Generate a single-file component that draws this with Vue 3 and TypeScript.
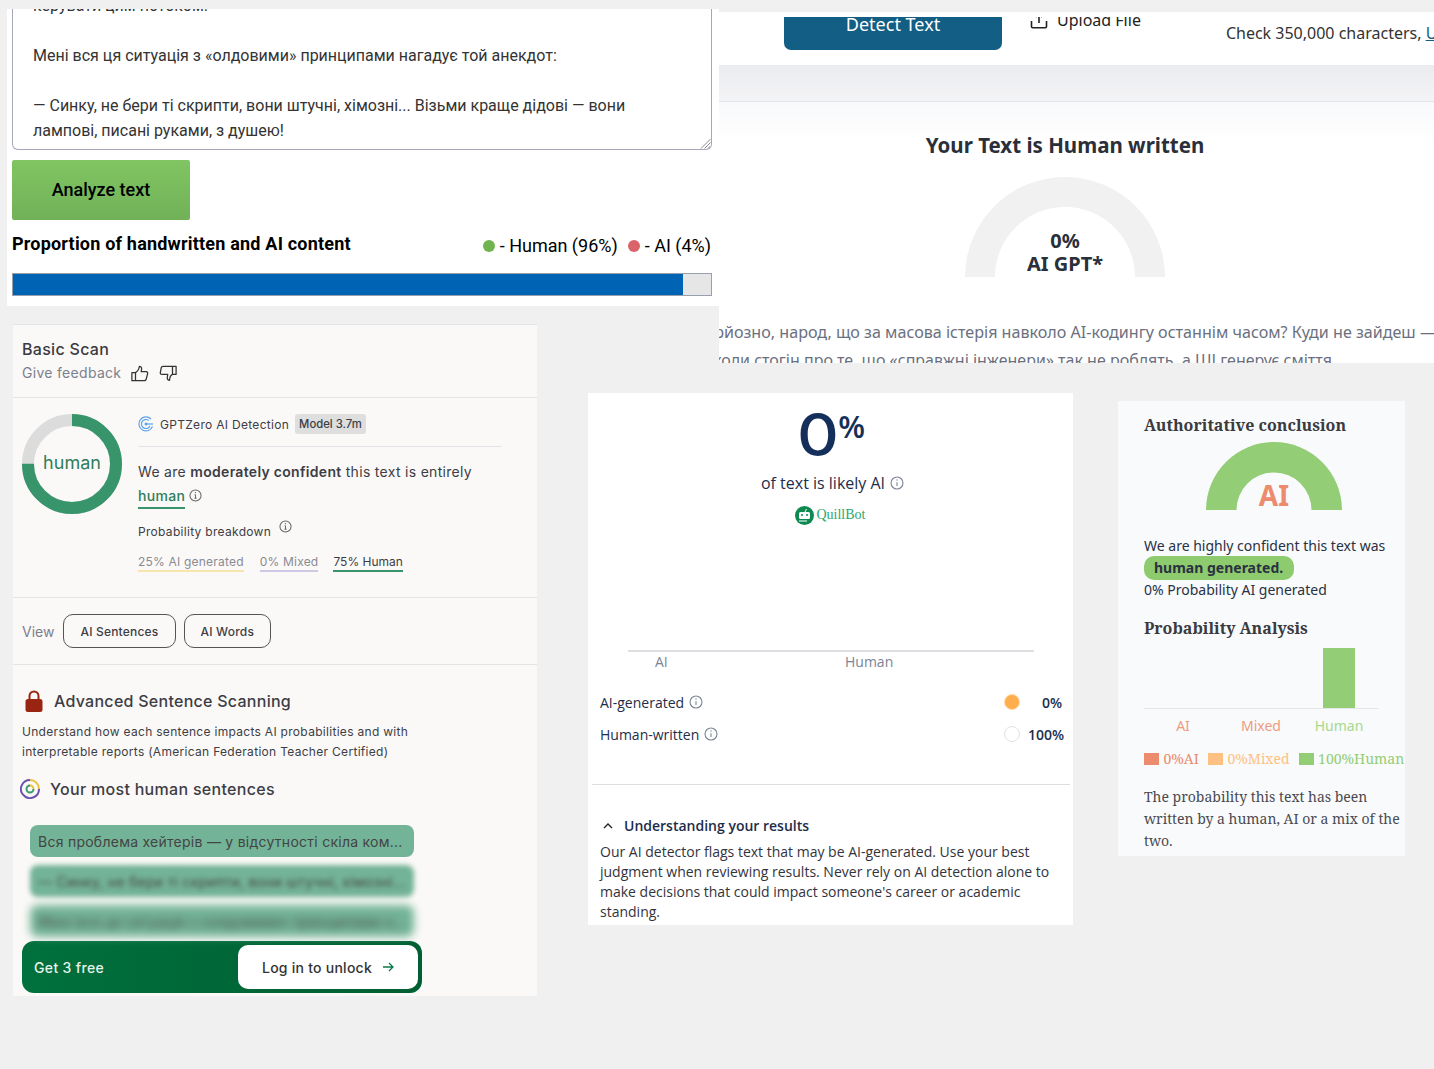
<script setup lang="ts">
interface Stat {
  label: string;
  color: string;
  strong?: boolean;
}

const stats: Stat[] = [
  { label: "25% AI generated", color: "#f8e5ad" },
  { label: "0% Mixed", color: "#cfc9e6" },
  { label: "75% Human", color: "#38956b", strong: true },
];

const sentences = [
  { text: "Вся проблема хейтерів — у відсутності скіла ком...", blur: 0 },
  { text: "— Синку, не бери ті скрипти, вони штучні, хімозні...", blur: 2.5 },
  { text: "Мені вся ця ситуація з «олдовими» принципами н...", blur: 4 },
];

const legend = [
  { label: "0%AI", box: "#ec8b6d", text: "#ec8b6d" },
  { label: "0%Mixed", box: "#fec181", text: "#fec181" },
  { label: "100%Human", box: "#93cd76", text: "#93cd76" },
];

const donutR = 44;
const donutLen = 2 * Math.PI * donutR;
</script>

<template>
  <div class="canvas">
    <!-- textarea checker -->
    <section class="win win-area">
      <div class="area">
        <p class="area-clip">керувати цим потоком.</p>
        <p class="blank">&nbsp;</p>
        <p>Мені вся ця ситуація з «олдовими» принципами нагадує той анекдот:</p>
        <p class="blank">&nbsp;</p>
        <p>— Синку, не бери ті скрипти, вони штучні, хімозні... Візьми краще дідові — вони лампові, писані руками, з душею!</p>
        <svg class="grip" width="11" height="11" viewBox="0 0 11 11">
          <path d="M10.5 1 1 10.5M10.5 4.5 4.5 10.5M10.5 8 8 10.5" stroke="#8a8a8a" stroke-width="1" fill="none" />
        </svg>
      </div>
      <button class="analyze">Analyze text</button>
      <div class="prop-row">
        <h3>Proportion of handwritten and AI content</h3>
        <div class="prop-legend">
          <i class="dot dot-green"></i><span>- Human (96%)</span>
          <i class="dot dot-red"></i><span>- AI (4%)</span>
        </div>
      </div>
      <div class="bar"><div class="bar-fill" :style="{ width: '96%' }"></div></div>
    </section>

    <!-- detect text result -->
    <section class="win win-detect">
      <div class="detect-top">
        <div class="detect-clip">
          <button class="detect-btn">Detect Text</button>
          <div class="upload">
            <svg width="18" height="18" viewBox="0 0 18 18" fill="none" stroke="#222" stroke-width="1.6">
              <path d="M1.5 10v5.500q0 1.200 1.200 1.200h12.600q1.200 0 1.200-1.200V10M9 12V3M5.800 6 9 2.800 12.200 6" />
            </svg>
            <span>Upload File</span>
          </div>
          <div class="check">Check 350,000 characters, <a>Upgrade</a></div>
        </div>
      </div>
      <div class="band"></div>
      <div class="detect-body">
        <h2>Your Text is Human written</h2>
        <div class="gauge-a">
          <svg width="200" height="100" viewBox="0 0 200 100">
            <path d="M0 100A100 100 0 0 1 200 100H170A70 70 0 0 0 30 100Z" fill="#f1f1f1" />
          </svg>
          <div class="gauge-a-text"><div>0%</div><div>AI GPT*</div></div>
        </div>
        <p class="detect-line first">Серйозно, народ, що за масова істерія навколо AI-кодингу останнім часом? Куди не зайдеш — всюди</p>
        <p class="detect-line second">коли стогін про те, що «справжні інженери» так не роблять, а ШІ генерує сміття</p>
      </div>
    </section>

    <!-- gptzero -->
    <section class="win win-zero">
      <header class="zero-head">
        <div class="zero-title">Basic Scan</div>
        <div class="feedback">
          <span>Give feedback</span>
          <svg width="18" height="17" viewBox="0 0 20 18" fill="none" stroke="#333" stroke-width="1.4" stroke-linejoin="round">
            <path d="M1 8h4v9H1zM5 8c2.500-1.500 4-4 4.300-7 1.700 0 2.700 1.200 2.500 3l-.5 3h5.600c1.200 0 1.900 1 1.600 2.100l-1.700 6.300c-.2.900-.9 1.600-1.900 1.600H5" />
          </svg>
          <svg width="18" height="17" viewBox="0 0 20 18" fill="none" stroke="#333" stroke-width="1.4" stroke-linejoin="round">
            <path d="M19 10h-4V1h4zM15 10c-1.500.6-3 2.500-3.300 6.500-1.700 0-2.700-1.200-2.500-3l.5-3.500H3.100C1.900 10 1.200 9 1.500 7.900l1-5.300C2.700 1.700 3.400 1 4.400 1H15" />
          </svg>
        </div>
      </header>
      <div class="zero-main">
        <div class="donut">
          <svg width="100" height="100" viewBox="0 0 100 100">
            <circle cx="50" cy="50" :r="donutR" fill="none" stroke="#dcdcdc" stroke-width="12" />
            <circle cx="50" cy="50" :r="donutR" fill="none" stroke="#38956b" stroke-width="12"
              :stroke-dasharray="`${donutLen * 0.75} ${donutLen}`" transform="rotate(-90 50 50)" />
          </svg>
          <span>human</span>
        </div>
        <div class="zero-info">
          <div class="brand">
            <svg width="16" height="16" viewBox="0 0 16 16" fill="none" stroke="#5aa2ee" stroke-width="1.200">
              <path d="M14.500 10.500A7 7 0 1 1 13 3" />
              <path d="M12 10A4.500 4.500 0 1 1 10.800 4.500" />
              <circle cx="8" cy="8" r="1.500" fill="#5aa2ee" stroke="none" />
              <path d="M8 8h7" />
            </svg>
            <span>GPTZero AI Detection</span>
            <b class="badge">Model 3.7m</b>
          </div>
          <p class="verdict">We are <b>moderately confident</b> this text is entirely</p>
          <p class="verdict v2">
            <b class="human">human</b>
            <svg class="info" width="13" height="13" viewBox="0 0 14 14" fill="none" stroke="#666" stroke-width="1.100">
              <circle cx="7" cy="7" r="6" /><path d="M7 6.300v3.700M5.800 10h2.400M6 6.300h1" /><circle cx="7" cy="4" r=".7" fill="#666" stroke="none" />
            </svg>
          </p>
          <div class="breakdown">
            <span>Probability breakdown</span>
            <svg width="13" height="13" viewBox="0 0 14 14" fill="none" stroke="#666" stroke-width="1.100">
              <circle cx="7" cy="7" r="6" /><path d="M7 6.300v3.700M5.800 10h2.400M6 6.300h1" /><circle cx="7" cy="4" r=".7" fill="#666" stroke="none" />
            </svg>
          </div>
          <div class="stats">
            <span v-for="s in stats" :key="s.label" class="stat" :class="{ strong: s.strong }"
              :style="{ borderBottomColor: s.color }">{{ s.label }}</span>
          </div>
        </div>
      </div>
      <div class="zero-view">
        <span>View</span>
        <button>AI Sentences</button>
        <button>AI Words</button>
      </div>
      <div class="zero-adv">
        <div class="adv-title">
          <svg width="18" height="22" viewBox="0 0 18 22">
            <path d="M4.500 10V6a4.500 4.500 0 0 1 9 0v4" fill="none" stroke="#9a2412" stroke-width="2" />
            <rect x="0.500" y="9" width="17" height="13" rx="2.500" fill="#9a2412" />
          </svg>
          <span>Advanced Sentence Scanning</span>
        </div>
        <p class="adv-desc">Understand how each sentence impacts AI probabilities and with interpretable reports (American Federation Teacher Certified)</p>
        <div class="most">
          <svg width="20" height="20" viewBox="0 0 20 20" fill="none" stroke-width="2">
            <path d="M10 1a9 9 0 0 1 9 9" stroke="#e8c23a" />
            <path d="M19 10a9 9 0 0 1-16 5.700A9 9 0 0 1 10 1" stroke="#6a54b0" />
            <path d="M13.500 10A3.500 3.500 0 1 1 10 6.500" stroke="#3d9a6c" />
            <path d="M10 6.500A3.500 3.500 0 0 1 13.500 10" stroke="#e8c23a" />
          </svg>
          <span>Your most human sentences</span>
        </div>
        <div class="pills">
          <div v-for="s in sentences" :key="s.text" class="pill" :style="{ filter: s.blur ? `blur(${s.blur}px)` : 'none' }">{{ s.text }}</div>
        </div>
        <div class="cta">
          <span>Get 3 free</span>
          <button>
            Log in to unlock
            <svg width="12" height="12" viewBox="0 0 12 12" fill="none" stroke="#0c7a48" stroke-width="1.300">
              <path d="M1 6h10M7 2l4 4-4 4" />
            </svg>
          </button>
        </div>
      </div>
    </section>

    <!-- quillbot -->
    <section class="win win-quill">
      <div class="score"><span class="zero">0</span><span class="pct">%</span></div>
      <div class="likely">
        of text is likely AI
        <svg width="14" height="14" viewBox="0 0 14 14" fill="none" stroke="#7b8494" stroke-width="1.100">
          <circle cx="7" cy="7" r="6" /><path d="M7 6.300v3.700" /><circle cx="7" cy="4" r=".7" fill="#7b8494" stroke="none" />
        </svg>
      </div>
      <div class="q-logo">
        <svg width="19" height="19" viewBox="0 0 19 19">
          <circle cx="9.500" cy="9.500" r="9.500" fill="#0d8a4f" />
          <rect x="4" y="6" width="11" height="7" rx="1.500" fill="#fff" />
          <circle cx="7" cy="9" r="1" fill="#0d8a4f" /><circle cx="12" cy="9" r="1" fill="#0d8a4f" />
          <path d="M10 6l1.500-3" stroke="#fff" stroke-width="1" />
          <path d="M4 15h8" stroke="#fff" stroke-width="1" />
        </svg>
        <span>QuillBot</span>
      </div>
      <div class="q-chart">
        <div class="q-axis"></div>
        <div class="q-labels"><span>AI</span><span>Human</span></div>
      </div>
      <div class="q-row">
        <span>AI-generated</span>
        <svg width="14" height="14" viewBox="0 0 14 14" fill="none" stroke="#7b8494" stroke-width="1.100">
          <circle cx="7" cy="7" r="6" /><path d="M7 6.300v3.700" /><circle cx="7" cy="4" r=".7" fill="#7b8494" stroke="none" />
        </svg>
        <i class="q-dot orange"></i>
        <b class="shift">0%</b>
      </div>
      <div class="q-row">
        <span>Human-written</span>
        <svg width="14" height="14" viewBox="0 0 14 14" fill="none" stroke="#7b8494" stroke-width="1.100">
          <circle cx="7" cy="7" r="6" /><path d="M7 6.300v3.700" /><circle cx="7" cy="4" r=".7" fill="#7b8494" stroke="none" />
        </svg>
        <i class="q-dot"></i>
        <b>100%</b>
      </div>
      <div class="q-rule"></div>
      <div class="q-under">
        <svg width="10" height="6" viewBox="0 0 10 6" fill="none" stroke="#222" stroke-width="1.400"><path d="M1 5l4-4 4 4" /></svg>
        <b>Understanding your results</b>
      </div>
      <p class="q-para">Our AI detector flags text that may be AI-generated. Use your best judgment when reviewing results. Never rely on AI detection alone to make decisions that could impact someone's career or academic standing.</p>
    </section>

    <!-- authoritative -->
    <section class="win win-auth">
      <h4>Authoritative conclusion</h4>
      <div class="gauge-b">
        <svg width="136" height="68" viewBox="0 0 136 68">
          <path d="M0 68A68 68 0 0 1 136 68H105.500A37.500 37.500 0 0 0 30.500 68Z" fill="#93cd76" />
        </svg>
        <span>AI</span>
      </div>
      <div class="auth-text">
        We are highly confident this text was<br />
        <b class="auth-pill">human generated.</b><br />
        0% Probability AI generated
      </div>
      <h4 class="h-prob">Probability Analysis</h4>
      <div class="auth-chart"><div class="auth-bar"></div></div>
      <div class="auth-labels"><span>AI</span><span>Mixed</span><span class="g">Human</span></div>
      <div class="auth-legend">
        <span v-for="l in legend" :key="l.label" :style="{ color: l.text }">
          <i :style="{ background: l.box }"></i>{{ l.label }}
        </span>
      </div>
      <p class="auth-para">The probability this text has been written by a human, AI or a mix of the two.</p>
    </section>
  </div>
</template>

<style>
html,
body {
  margin: 0;
  background: #f0f0f0;
}
</style>

<style scoped>
.canvas {
  position: relative;
  width: 1434px;
  height: 1069px;
  background: #f0f0f0;
  overflow: hidden;
}
.win {
  position: absolute;
  overflow: hidden;
  box-sizing: border-box;
}
p,
h2,
h3,
h4 {
  margin: 0;
}

/* textarea checker */
.win-area {
  left: 7px;
  top: 9px;
  width: 712px;
  height: 297px;
  background: #fff;
  padding: 0 7px 0 5px;
  font-family: Roboto, sans-serif;
  color: #000;
}
.area {
  position: relative;
  height: 141px;
  box-sizing: border-box;
  border: 1px solid #a3a7b8;
  border-top: 0;
  border-radius: 0 0 6px 6px;
  padding: 0 20px;
  font-size: 16px;
  line-height: 25px;
  color: #333;
  overflow: hidden;
}
.area-clip {
  margin-top: -16px;
}
.blank {
  height: 25px;
}
.grip {
  position: absolute;
  right: 0;
  bottom: 0;
}
.analyze {
  display: block;
  width: 178px;
  height: 60px;
  margin-top: 10px;
  padding: 0 0 1px;
  border: 0;
  border-radius: 2px;
  background: linear-gradient(#80c562, #71b158);
  font: 500 18px Roboto, sans-serif;
  color: #000;
}
.prop-row {
  display: flex;
  justify-content: space-between;
  margin-top: 12px;
  height: 29px;
}
.prop-row h3 {
  font-size: 18px;
  font-weight: 700;
  line-height: 24px;
  letter-spacing: 0.2px;
}
.prop-legend {
  display: flex;
  align-items: center;
  margin: -1px 1px 0 0;
  font-size: 18px;
  line-height: 24px;
  height: 29px;
}
.prop-legend span {
  margin-right: 10px;
}
.prop-legend span:last-child {
  margin-right: 0;
}
.dot {
  width: 12px;
  height: 12px;
  border-radius: 50%;
  margin-right: 5px;
}
.dot-green {
  background: #6fb44f;
}
.dot-red {
  background: #d9646a;
}
.bar {
  margin-top: 12px;
  height: 23px;
  width: 700px;
  box-sizing: border-box;
  border: 1px solid #9a9fae;
  background: #e6e6e6;
}
.bar-fill {
  height: 100%;
  background: #0063b4;
}

/* detect */
.win-detect {
  left: 719px;
  top: 12px;
  width: 715px;
  height: 351px;
  background: #fff;
  font-family: "Noto Sans", sans-serif;
}
.detect-top {
  height: 53px;
  padding-top: 5px;
  box-sizing: border-box;
}
.detect-clip {
  display: flex;
  height: 33px;
  overflow: hidden;
  padding-left: 65px;
  white-space: nowrap;
}
.detect-btn {
  flex: none;
  width: 218px;
  height: 33px;
  border: 0;
  border-radius: 0 0 7px 7px;
  background: #125e84;
  color: #fff;
  font: 400 18px "Noto Sans", sans-serif;
  line-height: 14px;
  padding: 0 0 24px;
}
.upload {
  display: flex;
  flex: none;
  gap: 9px;
  margin: -7px 0 0 28px;
  height: 20px;
  align-items: center;
  font-size: 16px;
  color: #222;
}
.check {
  flex: none;
  margin: 5px 0 0 85px;
  font-size: 16px;
  line-height: 22px;
  color: #333;
}
.check a {
  color: #125e84;
  text-decoration: underline;
}
.band {
  height: 37px;
  box-sizing: border-box;
  border-bottom: 1px solid #e3e4ec;
  background: linear-gradient(#ebecf0, #f3f3f5);
}
.detect-body {
  height: 261px;
  overflow: hidden;
  background: linear-gradient(#f8f9fb, #fff 40px);
  text-align: center;
}
.detect-body h2 {
  width: 692px;
  margin-top: 28px;
  font-size: 20.500px;
  font-weight: 700;
  line-height: 30px;
  color: #2a2f3a;
}
.gauge-a {
  position: relative;
  width: 200px;
  height: 100px;
  margin: 17px 0 0 246px;
}
.gauge-a svg {
  display: block;
}
.gauge-a-text {
  position: absolute;
  left: 0;
  right: 0;
  bottom: 2px;
  font-size: 20px;
  font-weight: 700;
  line-height: 23px;
  color: #2a2f3a;
}
.detect-line {
  text-align: left;
  white-space: nowrap;
  font-size: 16px;
  line-height: 28px;
  color: #6b7080;
}
.detect-line.first {
  margin: 41px 0 0 -24px;
  font-size: 16.100px;
}
.detect-line.second {
  margin-left: -6px;
}

/* gptzero */
.win-zero {
  left: 13px;
  top: 324px;
  width: 524px;
  height: 672px;
  background: #faf9f7;
  border-top: 1px solid #e5e5e5;
  font-family: Inter, sans-serif;
  color: #3d3d45;
}
.zero-head {
  height: 73px;
  box-sizing: border-box;
  padding: 14px 9px 0;
  border-bottom: 1px solid #e4e4e4;
}
.zero-title {
  font-size: 16px;
  font-weight: 500;
  line-height: 20px;
  letter-spacing: 0.3px;
  color: #3a3a42;
}
.feedback {
  display: flex;
  align-items: center;
  margin-top: 4px;
  font-size: 14px;
  letter-spacing: 0.3px;
  line-height: 20px;
  color: #7c808c;
}
.feedback svg:first-of-type {
  margin-left: 10px;
}
.feedback svg:last-of-type {
  margin-left: 10px;
}
.zero-main {
  display: flex;
  height: 200px;
  box-sizing: border-box;
  padding: 16px 0 0 9px;
  border-bottom: 1px solid #e4e4e4;
}
.donut {
  position: relative;
  flex: none;
  width: 100px;
  height: 100px;
}
.donut svg {
  display: block;
}
.donut span {
  position: absolute;
  left: 0;
  right: 0;
  top: 38px;
  text-align: center;
  font-size: 18px;
  line-height: 22px;
  color: #2f7d5a;
}
.zero-info {
  width: 364px;
  margin-left: 16px;
}
.brand {
  display: flex;
  align-items: center;
  height: 32px;
  border-bottom: 1px solid #e4e4ea;
  font-size: 12px;
  letter-spacing: 0.3px;
}
.brand svg {
  margin-right: 6px;
  margin-bottom: 12px;
}
.brand span {
  margin-bottom: 12px;
}
.badge {
  margin: 0 0 12px 6px;
  padding: 0 4px;
  height: 20px;
  line-height: 20px;
  border-radius: 3px;
  background: #dedede;
  font-size: 11.300px;
  font-weight: 500;
  letter-spacing: 0;
}
.verdict {
  margin-top: 13px;
  font-size: 14px;
  line-height: 24px;
  letter-spacing: 0.3px;
  white-space: nowrap;
}
.verdict b {
  font-weight: 600;
}
.verdict.v2 {
  margin-top: 1px;
  display: flex;
  align-items: center;
}
.human {
  color: #2f7d5a;
  border-bottom: 2px solid #38956b;
  line-height: 22px;
  font-weight: 500 !important;
}
.info {
  margin: 0 0 4px 4px;
}
.breakdown {
  display: flex;
  align-items: flex-start;
  gap: 8px;
  margin-top: 13px;
  font-size: 12px;
  line-height: 20px;
  letter-spacing: 0.3px;
}
.breakdown svg {
  margin-top: -2px;
}
.stats {
  display: flex;
  gap: 16px;
  margin-top: 11px;
  font-size: 12px;
  letter-spacing: 0.2px;
  color: #8a8a94;
}
.stat {
  line-height: 17px;
  border-bottom: 2px solid;
}
.stat.strong {
  margin-left: -1px;
  color: #3d3d45;
  letter-spacing: 0;
}
.zero-view {
  display: flex;
  align-items: center;
  gap: 8px;
  height: 67px;
  box-sizing: border-box;
  padding-left: 9px;
  border-bottom: 1px solid #e4e4e4;
  font-size: 14px;
  color: #7c808c;
}
.zero-view span {
  margin-right: 1px;
}
.zero-view button {
  height: 34px;
  padding: 0 16px;
  border: 1px solid #555;
  border-radius: 10px;
  background: transparent;
  font: 500 12px Inter, sans-serif;
  letter-spacing: 0.2px;
  color: #3d3d45;
}
.zero-adv {
  padding: 25px 0 0 9px;
}
.adv-title {
  display: flex;
  align-items: center;
  gap: 11px;
  padding-left: 3px;
  font-size: 16px;
  font-weight: 500;
  line-height: 22px;
  letter-spacing: 0.27px;
}
.adv-desc {
  width: 400px;
  margin-top: 10px;
  font-size: 12px;
  line-height: 20px;
  letter-spacing: 0.3px;
}
.most {
  display: flex;
  align-items: center;
  gap: 10px;
  margin: 17px 0 0 -2px;
  font-size: 16px;
  font-weight: 500;
  line-height: 20px;
  letter-spacing: 0.3px;
}
.pills {
  display: flex;
  flex-direction: column;
  gap: 8px;
  width: 384px;
  margin: 26px 0 0 8px;
}
.pill {
  height: 32px;
  box-sizing: border-box;
  padding: 0 8px;
  border-radius: 8px;
  background: #73b397;
  font-size: 14px;
  line-height: 33px;
  color: #444;
  white-space: nowrap;
  overflow: hidden;
  letter-spacing: 0.26px;
}
.cta {
  display: flex;
  align-items: center;
  justify-content: space-between;
  width: 400px;
  height: 52px;
  box-sizing: border-box;
  margin-top: 4px;
  padding: 4px 4px 4px 12px;
  border-radius: 12px;
  background: linear-gradient(90deg, #00703c, #005f33);
  font-size: 14px;
  font-weight: 500;
  letter-spacing: 0.35px;
  color: #e6f3ec;
}
.cta button {
  display: flex;
  align-items: center;
  gap: 10px;
  width: 180px;
  height: 44px;
  padding: 0 0 0 24px;
  border: 0;
  border-radius: 10px;
  background: #fff;
  font: 500 14px Inter, sans-serif;
  letter-spacing: 0.25px;
  color: #333;
}

/* quillbot */
.win-quill {
  left: 588px;
  top: 393px;
  width: 485px;
  height: 532px;
  background: #fff;
  font-family: "Open Sans", sans-serif;
  color: #1d2d4a;
}
.score {
  display: flex;
  justify-content: center;
  height: 72px;
  color: #14305a;
  padding-left: 3px;
}
.zero {
  display: inline-block;
  font-family: Inter, sans-serif;
  font-size: 59px;
  font-weight: 500;
  line-height: 84px;
  transform: scaleX(1.1);
}
.pct {
  font-size: 31px;
  font-weight: 600;
  line-height: 66px;
  margin-left: 1px;
}
.likely {
  display: flex;
  justify-content: center;
  align-items: center;
  gap: 5px;
  margin-top: 7px;
  font-size: 16px;
  line-height: 22px;
  padding-left: 4px;
}
.q-logo {
  display: flex;
  justify-content: center;
  align-items: center;
  gap: 2px;
  margin-top: 11px;
  height: 20px;
  font-family: "Liberation Serif", serif;
  font-size: 14px;
  color: #2ba86a;
}
.q-chart {
  margin: 125px 0 0 40px;
  width: 406px;
}
.q-axis {
  height: 2px;
  background: #dfdfe3;
}
.q-labels {
  display: flex;
  font-size: 14px;
  line-height: 20px;
  color: #7b8494;
}
.q-labels span:first-child {
  margin-left: 27px;
  width: 190px;
}
.q-row {
  display: flex;
  align-items: center;
  gap: 5px;
  height: 32px;
  padding: 0 9px 0 12px;
  font-size: 14px;
}
.q-chart + .q-row {
  margin-top: 14px;
}
.q-dot {
  width: 16px;
  height: 16px;
  box-sizing: border-box;
  margin-left: auto;
  border: 1px solid #e2e2e2;
  border-radius: 50%;
}
.q-dot.orange {
  background: #ffae4d;
  border-color: #ffd9ab;
}
.q-row b {
  width: 39px;
  text-align: right;
  font-weight: 600;
  color: #1d2d4a;
}
.q-row b.shift {
  width: 37px;
  margin-right: 2px;
}
.q-rule {
  height: 1px;
  margin: 34px 3px 0 4px;
  background: #dedede;
}
.q-under {
  display: flex;
  align-items: center;
  gap: 11px;
  margin-top: 31px;
  padding-left: 15px;
  font-size: 14px;
  line-height: 20px;
}
.q-under b {
  font-weight: 600;
  color: #1d2d4a;
}
.q-para {
  margin-top: 6px;
  padding: 0 20px 0 12px;
  font-size: 14px;
  line-height: 20px;
  color: #33333d;
}

/* authoritative */
.win-auth {
  left: 1118px;
  top: 401px;
  width: 287px;
  height: 455px;
  padding-left: 26px;
  background: #f9fafc;
  font-family: "Noto Sans", sans-serif;
  color: #2a3142;
}
.win-auth h4 {
  font-family: "Noto Serif", "DejaVu Serif", serif;
  font-size: 16px;
  font-weight: 700;
  line-height: 24px;
  margin-top: 12px;
  color: #3a3a3f;
  white-space: nowrap;
}
.gauge-b {
  position: relative;
  width: 136px;
  height: 68px;
  margin: 5px 0 0 62px;
}
.gauge-b svg {
  display: block;
}
.gauge-b span {
  position: absolute;
  left: 0;
  right: 0;
  bottom: -4px;
  text-align: center;
  font-size: 28px;
  font-weight: 700;
  line-height: 38px;
  color: #ec8b6d;
}
.auth-text {
  margin-top: 25px;
  font-size: 14px;
  line-height: 22px;
  white-space: nowrap;
}
.auth-pill {
  display: inline-block;
  width: 150px;
  height: 24px;
  box-sizing: border-box;
  margin: -1px 0;
  padding-left: 10px;
  border-radius: 10px;
  background: #8ecb6e;
  line-height: 23px;
  font-weight: 700;
  vertical-align: top;
  color: #2a3142;
}
.win-auth h4.h-prob {
  margin-top: 15px;
}
.auth-chart {
  display: flex;
  justify-content: flex-end;
  align-items: flex-end;
  width: 234px;
  height: 60px;
  margin-top: 8px;
  border-bottom: 1px solid #e4e6ea;
}
.auth-bar {
  width: 32px;
  height: 60px;
  margin-right: 23px;
  background: #93cd76;
}
.auth-labels {
  display: flex;
  width: 234px;
  margin-top: 7px;
  font-size: 14px;
  line-height: 20px;
  color: #ee9a80;
  text-align: center;
}
.auth-labels span {
  flex: 1;
}
.auth-labels .g {
  color: #a6d98f;
}
.auth-legend {
  display: flex;
  gap: 9px;
  margin-top: 13px;
  font-family: "Noto Serif", "DejaVu Serif", serif;
  font-size: 14px;
  line-height: 20px;
  white-space: nowrap;
}
.auth-legend i {
  display: inline-block;
  width: 15px;
  height: 12px;
  margin-right: 4.500px;
  vertical-align: -1px;
}
.auth-para {
  margin-top: 17px;
  font-family: "Noto Serif", "Liberation Serif", serif;
  font-size: 14px;
  line-height: 22px;
  color: #4a4a50;
}
</style>
